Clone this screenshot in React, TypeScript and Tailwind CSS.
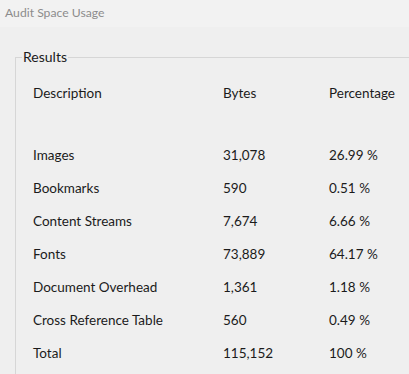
import React from "react";

const rows: [string, string, string][] = [
  ["Images", "31,078", "26.99 %"],
  ["Bookmarks", "590", "0.51 %"],
  ["Content Streams", "7,674", "6.66 %"],
  ["Fonts", "73,889", "64.17 %"],
  ["Document Overhead", "1,361", "1.18 %"],
  ["Cross Reference Table", "560", "0.49 %"],
  ["Total", "115,152", "100 %"],
];

export default function App() {
  return (
    <div
      className="w-[409px] h-[374px] overflow-hidden bg-[#efefef] text-[#1b1b1b]"
      style={{ fontFamily: "Lato, 'Open Sans', sans-serif" }}
    >
      <div className="h-[27px] bg-[#f2f2f2] flex items-center pl-[5px] text-[12.2px] text-[#8c8c8c]">
        Audit Space Usage
      </div>
      <div className="pt-[22px] pl-[15px]">
        <fieldset className="w-[460px] h-[360px] border-l border-t border-[#d6d6d6]">
          <legend className="ml-[6px] px-[1px] text-[14px] leading-[16px]">Results</legend>
          <div className="pl-[17px] pt-[12px] text-[13.5px]">
            <div className="grid grid-cols-[190px_106px_1fr] h-[33px] items-center">
              <span>Description</span>
              <span>Bytes</span>
              <span>Percentage</span>
            </div>
            <div className="h-[29px]" />
            {rows.map(([a, b, c]) => (
              <div key={a} className="grid grid-cols-[190px_106px_1fr] h-[33px] items-center">
                <span>{a}</span>
                <span>{b}</span>
                <span>{c}</span>
              </div>
            ))}
          </div>
        </fieldset>
      </div>
    </div>
  );
}
